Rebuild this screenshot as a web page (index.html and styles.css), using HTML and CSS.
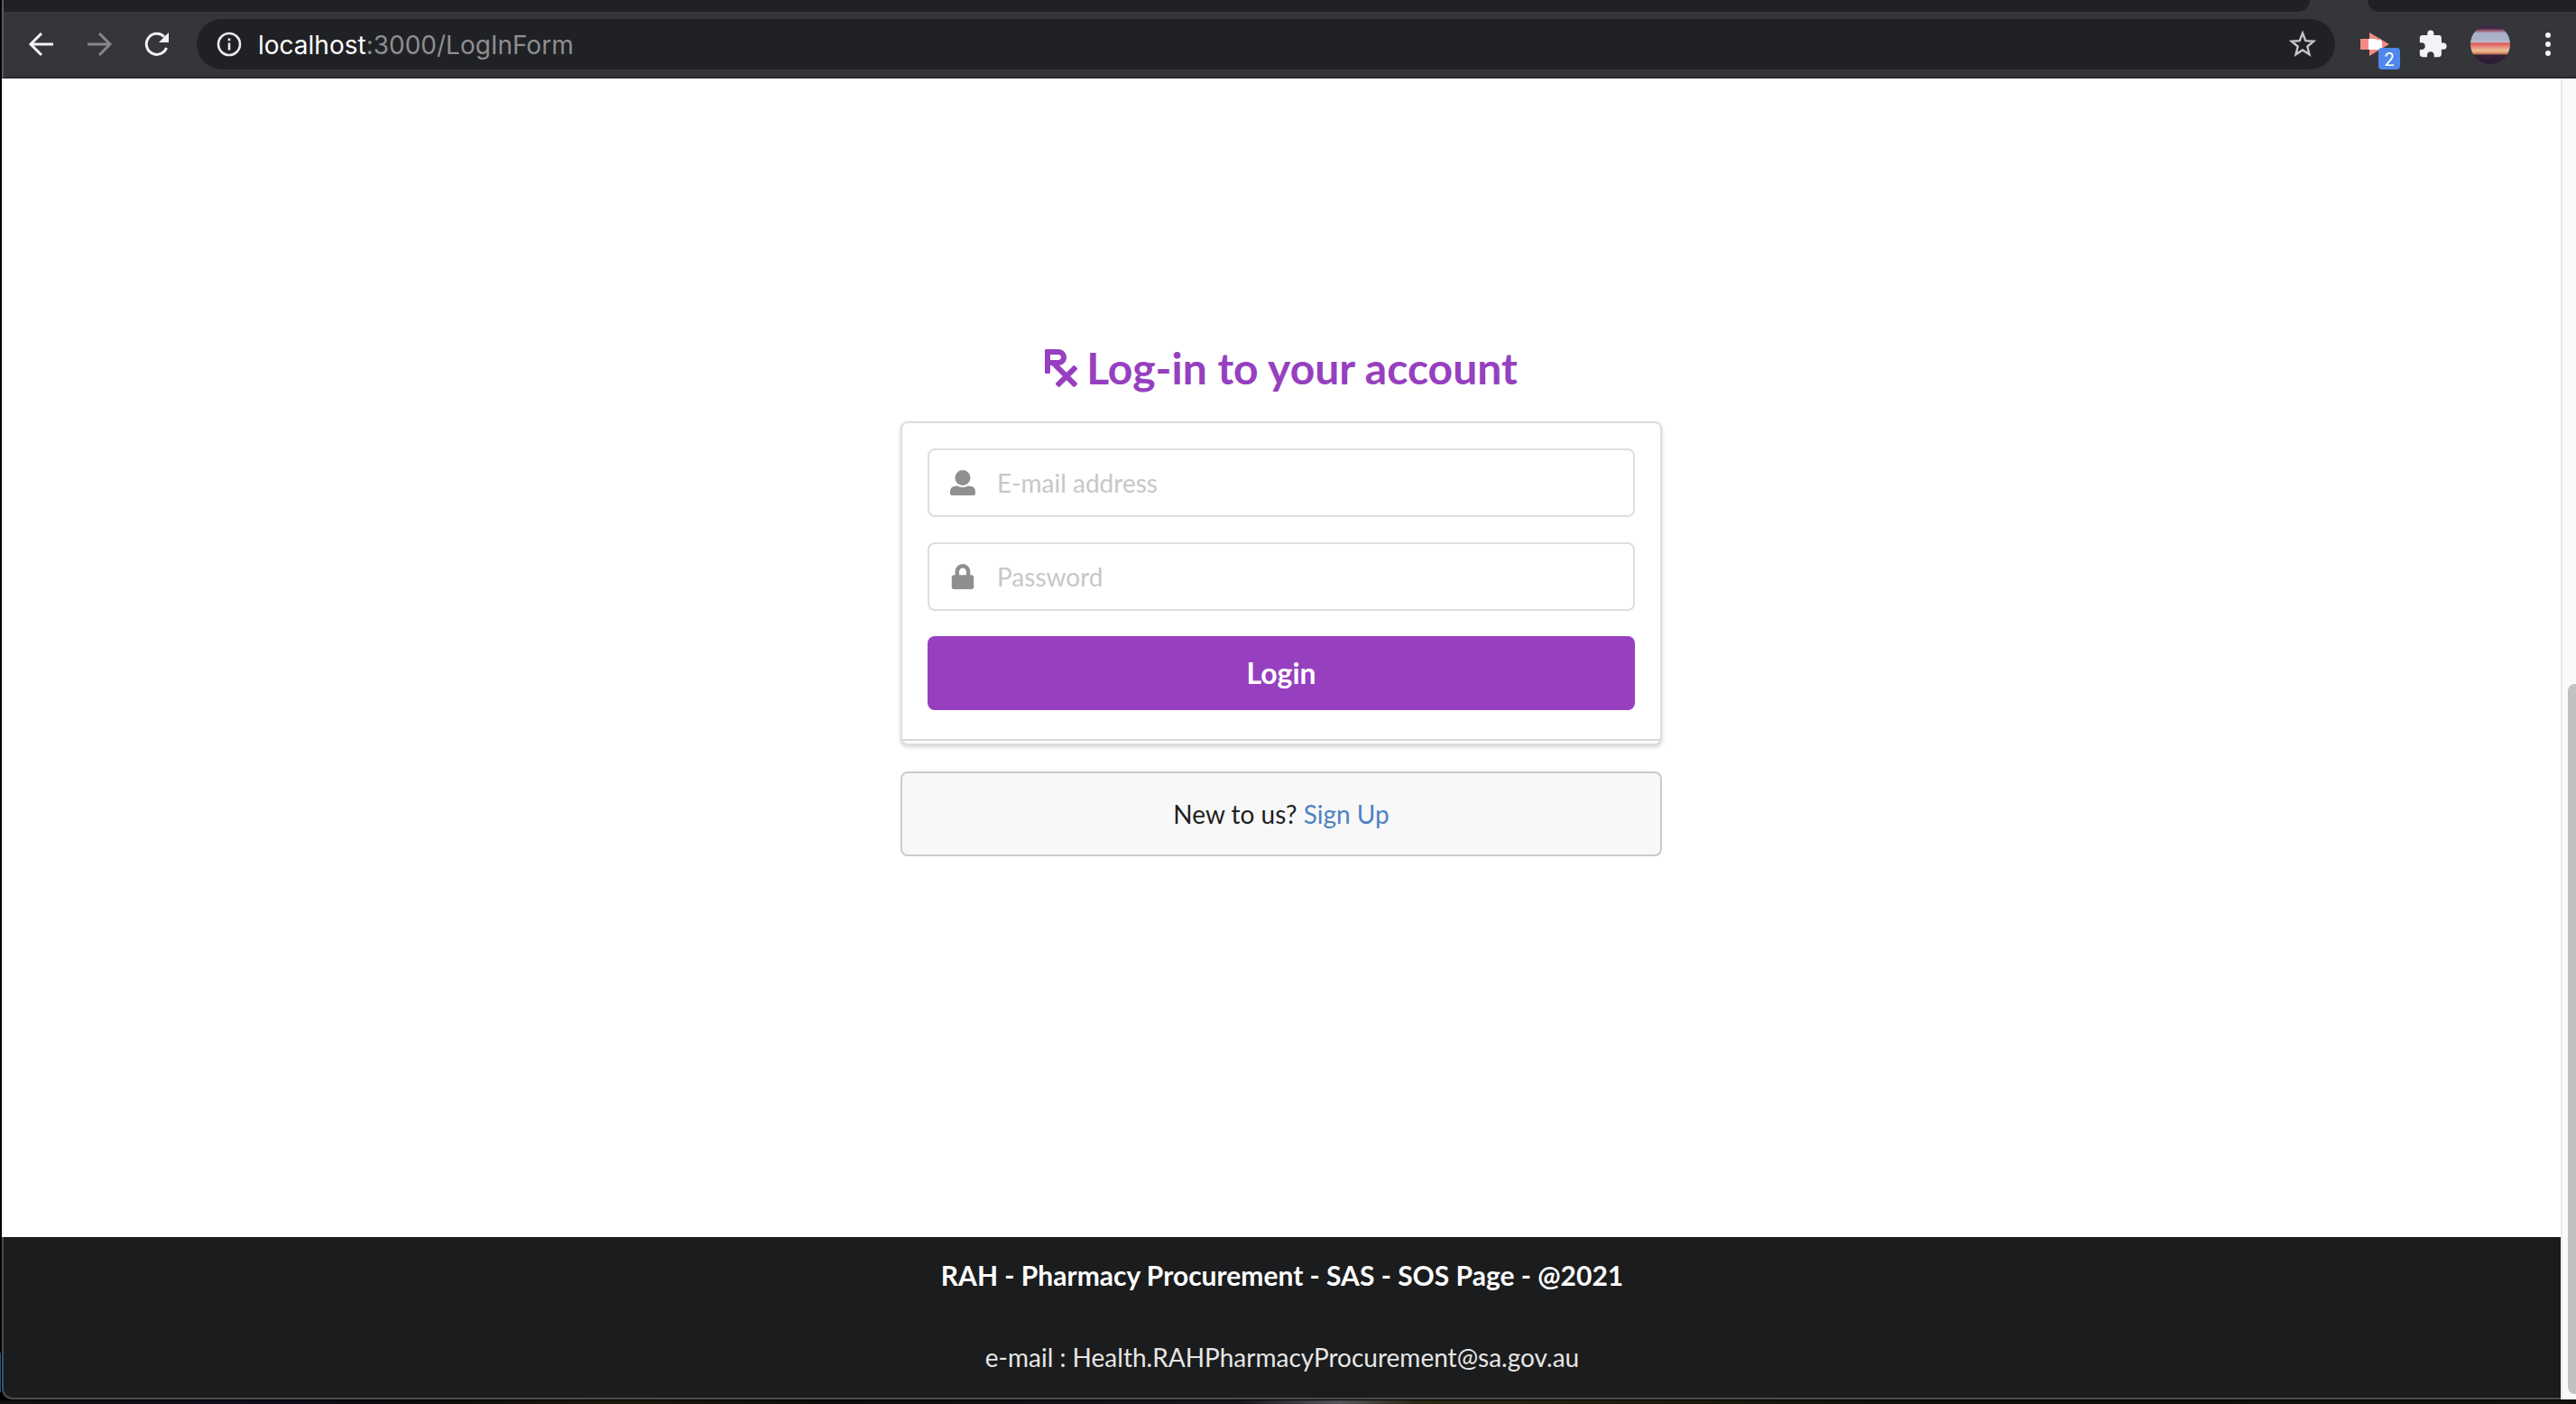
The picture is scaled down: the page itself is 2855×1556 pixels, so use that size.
FILE: index.html
```html
<!DOCTYPE html>
<html lang="en">
<head>
<meta charset="utf-8">
<title>Log-in</title>
<meta name="viewport" content="width=device-width, initial-scale=1">
<link rel="stylesheet" href="styles.css">
</head>
<body>
<div class="window">
  <header class="browser">
    <div class="tabs"><div class="tab-left"></div><div class="tab-right"></div></div>
    <div class="toolbar">
      <nav class="nav" aria-label="Browser">
        <button class="tool" type="button" aria-label="Back">
          <svg viewBox="0 0 32 32" width="32" height="32" fill="none" stroke="#f1f3f4" stroke-width="3"><path d="M29 16H5M16 4L4 16l12 12"/></svg>
        </button>
        <button class="tool" type="button" aria-label="Forward">
          <svg viewBox="0 0 32 32" width="32" height="32" fill="none" stroke="#868789" stroke-width="3"><path d="M3 16h24M16 4l12 12-12 12"/></svg>
        </button>
        <button class="tool" type="button" aria-label="Reload">
          <svg viewBox="0 0 32 32" width="32" height="32"><path d="M26.500 20A11.500 11.500 0 1 1 24 7.800" fill="none" stroke="#f1f3f4" stroke-width="3"/><path d="M29 3v11H18z" fill="#f1f3f4"/></svg>
        </button>
      </nav>
      <div class="address">
        <svg class="info" viewBox="0 0 28 28" width="28" height="28"><circle cx="14" cy="14" r="12" fill="none" stroke="#e8eaed" stroke-width="2.600"/><path d="M12.700 12.500h2.600V20.500h-2.600zM12.700 7.500h2.600v2.800h-2.600z" fill="#e8eaed"/></svg>
        <p class="url"><span class="host">localhost</span>:3000/LogInForm</p>
        <svg class="star" viewBox="0 0 30 30" width="30" height="30"><path d="M15 2.800l3.300 8.300 8.900.7-6.900 5.700 2.200 8.800-7.500-4.800-7.500 4.800 2.200-8.800-6.900-5.700 8.900-.7z" fill="none" stroke="#c4c5c7" stroke-width="2.400"/></svg>
      </div>
      <div class="actions">
        <div class="extension">
          <svg viewBox="0 0 34 28" width="34" height="28"><path d="M1 8h10V1l22 13-22 13v-7H1z" fill="#f28b86"/><path d="M10 8h8l3 2 2-2 2 4v8H10z" fill="#fff"/></svg>
          <span class="badge">2</span>
        </div>
        <svg class="puzzle" viewBox="0 0 24 24" width="34" height="34"><path d="M20.500 11H19V7c0-1.100-.9-2-2-2h-4V3.500a2.500 2.500 0 0 0-5 0V5H4c-1.100 0-1.990.9-1.990 2v3.800H3.500c1.490 0 2.700 1.210 2.700 2.700s-1.210 2.700-2.700 2.700H2V20c0 1.100.9 2 2 2h3.800v-1.500c0-1.490 1.210-2.700 2.700-2.700s2.700 1.210 2.700 2.700V22H17c1.100 0 2-.9 2-2v-4h1.500a2.500 2.500 0 0 0 0-5z" fill="#f1f3f4"/></svg>
        <div class="avatar"></div>
        <svg class="menu" viewBox="0 0 8 28" width="8" height="28" fill="#f1f3f4"><circle cx="4" cy="4" r="3"/><circle cx="4" cy="14" r="3"/><circle cx="4" cy="24" r="3"/></svg>
      </div>
    </div>
  </header>
  <div class="viewport">
    <div class="page">
      <main class="main">
        <h1 class="title">
          <svg viewBox="0 0 384 512" width="36" height="48" fill="currentColor"><path d="M301.260 352l78.060-78.060c6.250-6.250 6.250-16.380 0-22.630l-22.630-22.630c-6.250-6.250-16.380-6.250-22.630 0L256 306.740l-83.960-83.960C219.310 216.800 256 176.890 256 128c0-53.020-42.980-96-96-96H16C7.160 32 0 39.160 0 48v256c0 8.840 7.160 16 16 16h32c8.840 0 16-7.160 16-16v-80h18.750l128 128-78.060 78.060c-6.250 6.250-6.250 16.380 0 22.630l22.630 22.630c6.250 6.250 16.380 6.250 22.630 0L256 397.250l78.060 78.060c6.250 6.250 16.380 6.250 22.630 0l22.630-22.630c6.250-6.250 6.250-16.380 0-22.630L301.260 352zM64 96h96c17.640 0 32 14.360 32 32s-14.360 32-32 32H64V96z"/></svg>
          <span>Log-in to your account</span>
        </h1>
        <form class="card">
          <label class="field">
            <svg viewBox="0 0 28 28" width="28" height="28" fill="#8f8f8f"><circle cx="14" cy="8.500" r="8.500"/><path d="M8 17.600Q14 20.600 20 17.600Q28 17.600 28 24v2a2 2 0 0 1-2 2H2a2 2 0 0 1-2-2v-2Q0 17.600 8 17.600z"/></svg>
            <input class="input" type="email" placeholder="E-mail address" aria-label="E-mail address">
          </label>
          <label class="field">
            <svg viewBox="0 0 448 512" width="28" height="28" fill="#8f8f8f"><path d="M400 224h-24v-72C376 68.200 307.800 0 224 0S72 68.200 72 152v72H48c-26.500 0-48 21.500-48 48v192c0 26.500 21.500 48 48 48h352c26.500 0 48-21.500 48-48V272c0-26.500-21.500-48-48-48zm-104 0H152v-72c0-39.700 32.300-72 72-72s72 32.300 72 72v72z"/></svg>
            <input class="input" type="password" placeholder="Password" aria-label="Password">
          </label>
          <button class="login" type="button">Login</button>
        </form>
        <p class="message">New to us? <a class="link" href="#signup">Sign Up</a></p>
      </main>
      <footer class="footer">
        <h2 class="footer-title">RAH - Pharmacy Procurement - SAS - SOS Page - @2021</h2>
        <p class="footer-mail">e-mail : Health.RAHPharmacyProcurement@sa.gov.au</p>
      </footer>
    </div>
    <div class="scrollbar"><div class="thumb"></div></div>
  </div>
</div>
</body>
</html>
```
FILE: styles.css
```css
* {
  box-sizing: border-box;
}

body {
  margin: 0;
  background: linear-gradient(90deg, #11110f, #0d0c1c 10%, #0a0a0a 16%, #1c180d 24%, #0b0b0a 32%, #14161c 48%, #55565a 52%, #2a2714 55%, #1c1b0e 65%, #0c0c0a 76%, #12110d);
  font: 28px/40px Lato, "Liberation Sans", sans-serif;
  color: #1e1f20;
}

h1, h2, p {
  margin: 0;
}

.window {
  display: flex;
  flex-direction: column;
  min-height: calc(100vh - 4px);
  padding-left: 2px;
  border-bottom: 1px solid #000;
  background: linear-gradient(#0a5c9e, #0a5c9e) 0 calc(100% - 8px) / 1px 44px no-repeat, #000;
}

/* Browser chrome */
.browser {
  background: #35363a;
  border-left: 2px solid #5b5c5f;
  border-bottom: 2px solid #28292b;
}

.tabs {
  display: flex;
  justify-content: space-between;
  height: 13px;
}

.tab-left,
.tab-right {
  background: #202124;
}

.tab-left {
  flex: 1;
  margin-right: 64px;
  border-bottom-right-radius: 16px;
}

.tab-right {
  width: 231px;
  border-bottom-left-radius: 16px;
}

.toolbar {
  display: flex;
  align-items: center;
  height: 72px;
  padding: 0 27px 0 26px;
}

.nav {
  display: flex;
  gap: 32px;
}

.tool {
  display: flex;
  padding: 0;
  border: 0;
  background: none;
}

.address {
  display: flex;
  flex: 1;
  align-items: center;
  height: 56px;
  margin-left: 28px;
  padding: 0 21px 0 22px;
  border-radius: 28px;
  background: #202124;
}

.url {
  flex: 1;
  margin-left: 18px;
  padding-top: 2px;
  font-family: Inter, "Liberation Sans", sans-serif;
  color: #8d8e90;
}

.host {
  color: #fff;
}

.actions {
  display: flex;
  align-items: center;
  margin-left: 27px;
}

.extension {
  position: relative;
  display: flex;
}

.badge {
  position: absolute;
  left: 21px;
  top: 18px;
  width: 24px;
  height: 24px;
  border-radius: 4px;
  background: #4f87ed;
  color: #fff;
  font: 20px/26px Roboto, sans-serif;
  text-align: center;
}

.puzzle {
  margin-left: 30px;
}

.avatar {
  width: 44px;
  height: 44px;
  margin-left: 25px;
  border-radius: 50%;
  background: linear-gradient(#3d2a49 0 10%, #a15d72 16%, #a9b1c8 22% 38%, #c0b8c8 44%, #e0595b 49%, #e78b80 56%, #eac093 66%, #d98a62 73%, #34213a 78%, #271a30);
}

.menu {
  margin-left: 38px;
}

/* Page */
.viewport {
  display: flex;
  flex: 1;
}

.page {
  display: flex;
  flex: 1;
  flex-direction: column;
}

.main {
  display: flex;
  flex: 1;
  flex-direction: column;
  align-items: center;
  justify-content: center;
  padding-bottom: 132px;
  background: #fff;
}

.title {
  display: flex;
  align-items: center;
  gap: 10px;
  margin-bottom: 28px;
  font-size: 48px;
  line-height: 62px;
  color: #9640bf;
}

.card {
  display: flex;
  flex-direction: column;
  gap: 28px;
  width: 844px;
  max-width: 100%;
  padding: 28px 28px 37px;
  border: 2px solid #dededf;
  border-radius: 8px;
  background: linear-gradient(#d8d8d8, #d8d8d8) 0 calc(100% - 3px) / 100% 2px no-repeat, #fff;
  box-shadow: 0 2px 4px rgba(34, 36, 38, 0.2);
}

.field {
  display: flex;
  align-items: center;
  gap: 24px;
  height: 76px;
  padding-left: 23px;
  border: 2px solid #dededf;
  border-radius: 8px;
}

.input {
  flex: 1;
  min-width: 0;
  padding: 0;
  border: 0;
  outline: 0;
  background: none;
  font: inherit;
}

.input::placeholder {
  color: #c7c7c7;
}

.login {
  height: 82px;
  border: 0;
  border-radius: 8px;
  background: #9640bf;
  color: #fff;
  font: bold 32px/32px Lato, sans-serif;
}

.message {
  width: 844px;
  max-width: 100%;
  margin-top: 29px;
  padding: 25px 40px;
  border: 2px solid #c9caca;
  border-radius: 8px;
  background: #f8f8f9;
  text-align: center;
}

.link {
  color: #4c82c3;
  text-decoration: none;
}

.footer {
  height: 180px;
  padding-top: 22px;
  border-left: 2px solid #4b4c4d;
  border-bottom: 2px solid #4b4c4d;
  border-bottom-left-radius: 12px;
  background: #1b1c1d;
  color: #e6e6e6;
  text-align: center;
}

.footer-title {
  margin-bottom: 51px;
  font-size: 30px;
  line-height: 40px;
  color: #fff;
}

.scrollbar {
  display: flex;
  flex-direction: column;
  justify-content: flex-end;
  width: 17px;
  padding: 0 0 6px 6px;
  border-left: 2px solid #e8e8e8;
  background: #fafafa;
}

.thumb {
  height: 54%;
  border-radius: 8px 0 0 8px;
  background: #c1c1c1;
}
```
